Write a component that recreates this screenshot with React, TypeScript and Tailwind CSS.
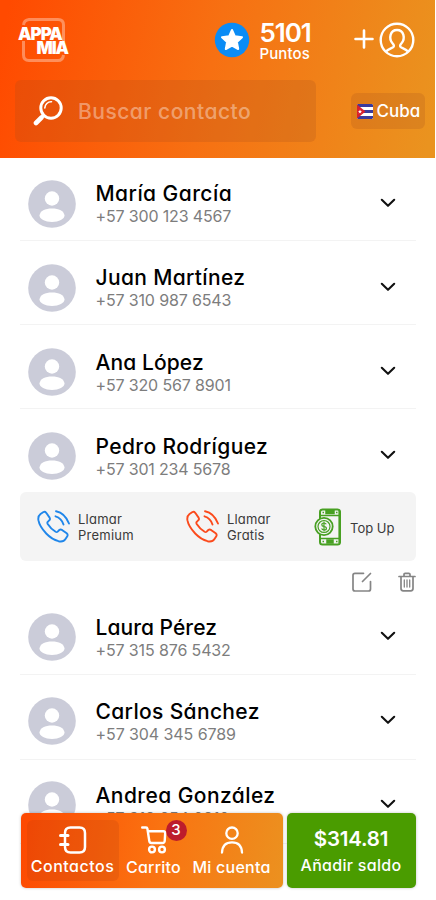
import React from 'react';
import clsx from 'clsx';

interface Contact {
  name: string;
  phone: string;
  nameClass: string;
  phoneClass: string;
}

const contacts: Contact[] = [
  { name: 'María García', phone: '+57 300 123 4567', nameClass: 'tracking-[0.450px]', phoneClass: 'tracking-[-0.150px]' },
  { name: 'Juan Martínez', phone: '+57 310 987 6543', nameClass: 'tracking-[0.350px]', phoneClass: 'tracking-[-0.150px]' },
  { name: 'Ana López', phone: '+57 320 567 8901', nameClass: 'tracking-[0.100px]', phoneClass: 'tracking-[-0.150px]' },
  { name: 'Pedro Rodríguez', phone: '+57 301 234 5678', nameClass: 'tracking-[0.400px]', phoneClass: 'tracking-[-0.170px]' },
];

const moreContacts: Contact[] = [
  { name: 'Laura Pérez', phone: '+57 315 876 5432', nameClass: 'tracking-[0.050px]', phoneClass: 'tracking-[-0.130px]' },
  { name: 'Carlos Sánchez', phone: '+57 304 345 6789', nameClass: 'tracking-[0.350px]', phoneClass: 'tracking-[-0.080px]' },
  { name: 'Andrea González', phone: '+57 312 654 0210', nameClass: 'tracking-[0.430px]', phoneClass: 'tracking-[-0.100px]' },
];

const Logo = () => (
  <div className="relative mt-[18px] ml-[22px] h-[44px] w-[43px] shrink-0">
    <svg viewBox="0 0 43 44" className="h-full w-full" fill="none" stroke="#fff" strokeOpacity={0.35} strokeWidth={3}>
      <path d="M1.500 7 Q2 2 7 1.500 H36 Q41.500 1.500 41.500 7 V24 M41.500 37 Q41 42.500 36 42.500 H7 Q1.500 42.500 1.500 37 V23" />
    </svg>
    <span className="absolute top-[9px] -left-[4px] text-[17px] leading-[14px] font-black tracking-[-1px] text-white">APPA</span>
    <span className="absolute top-[23px] left-[14.500px] text-[17px] leading-[14px] font-black tracking-[-1.100px] text-white">MIA</span>
  </div>
);

const StarBadge = () => (
  <svg viewBox="0 0 36 36" className="h-9 w-9">
    <circle cx="18" cy="18" r="17.200" fill="#0b8cf5" />
    <path
      d="M18 8 L20.900 14.300 L28 15.200 L22.900 20 L24.200 27 L18 23.600 L11.800 27 L13.100 20 L8 15.200 L15.100 14.300 Z"
      fill="#fff"
      stroke="#fff"
      strokeWidth={2}
      strokeLinejoin="round"
    />
  </svg>
);

const ProfileIcon = () => (
  <svg viewBox="0 0 36 36" className="h-9 w-9" fill="none" stroke="#fff" strokeWidth={2.4}>
    <circle cx="18" cy="18" r="16.300" />
    <path d="M7 29.500 C9 27 12 26.500 14 25.300 C15.500 24.300 15 23 13.500 21.300 C9.500 16.500 11 8 18 8 C25 8 26.500 16.500 22.500 21.300 C21 23 20.500 24.300 22 25.300 C24 26.500 27 27 29 29.500" />
  </svg>
);

const SearchIcon = () => (
  <svg viewBox="0 0 30 30" className="h-[30px] w-[30px]" fill="none" stroke="#fff" strokeLinecap="round">
    <circle cx="18" cy="12" r="10.200" strokeWidth={3} />
    <path d="M11.800 12 A6.300 6.300 0 0 1 18.500 5.800" strokeWidth={1.6} />
    <path d="M10.500 19.500 L8 22" strokeWidth={3} />
    <path d="M8.500 21.500 L3 27" strokeWidth={4.600} />
  </svg>
);

const CubaFlag = () => (
  <svg viewBox="0 0 16 15" className="h-[15px] w-4">
    <rect width="16" height="15" rx="1.500" fill="#fff" />
    <path d="M1 0 H15 L16 1 V3 H0 V1 Z M0 6 H16 V9 H0 Z M0 12 H16 V14 L15 15 H1 L0 14 Z" fill="#3b3a9c" />
    <path d="M0 0.500 L8.500 7.500 L0 14.500 Z" fill="#d9202d" />
    <path d="M3 5.500 L3.600 7 H5 L3.900 8 L4.300 9.500 L3 8.600 L1.700 9.500 L2.100 8 L1 7 H2.400 Z" fill="#fff" />
  </svg>
);

const Avatar = () => (
  <svg viewBox="0 0 48 48" className="h-12 w-12 shrink-0">
    <circle cx="24" cy="24" r="23.800" fill="#cbccd9" />
    <circle cx="24" cy="18.500" r="7.200" fill="#fff" />
    <path d="M11.500 35.500 C12 31 17 28.500 24 28.500 C31 28.500 36 31 36.500 35.500 C36.500 39 31 42 24 42 C17 42 11.500 39 11.500 35.500 Z" fill="#fff" />
  </svg>
);

const Chevron = () => (
  <svg viewBox="0 0 16 10" className="h-[10px] w-4" fill="none" stroke="#111" strokeWidth={2.100} strokeLinecap="round" strokeLinejoin="round">
    <path d="M1.800 1.800 L8 7.800 L14.200 1.800" />
  </svg>
);

const CallIcon = ({ color }: { color: string }) => (
  <svg viewBox="0 0 34 34" className="h-[34px] w-[34px]" fill="none" stroke={color} strokeWidth={1.9} strokeLinecap="round" strokeLinejoin="round">
    <path d="M3.500 4 L6.500 2 Q8 1.300 9.200 2.800 L12.600 7.600 Q13.500 9.200 12.200 10.400 L10.700 11.900 Q10 12.800 10.700 14 Q13.500 18.500 18.600 21.800 Q19.800 22.500 20.700 21.600 L22.300 20 Q23.500 19 25 19.900 L29.700 23.300 Q31.200 24.600 30.300 26.200 L28.500 29 Q26.500 32.300 21.500 31.200 Q15 29.500 9.200 23.500 Q2.500 16.500 1.400 10.200 Q0.800 6 3.500 4 Z" />
    <path d="M19 1.200 Q28 3 32 13.500" />
    <path d="M18.500 6.300 Q24.500 8 26.500 14.500" />
  </svg>
);

const TopUpIcon = () => (
  <svg viewBox="0 0 28 38" className="h-[38px] w-7" fill="none" stroke="#48a023" strokeWidth={1.5}>
    <path d="M6 11 V4 Q6 1.500 8.500 1.500 H23.500 Q26 1.500 26 4 V34 Q26 36.500 23.500 36.500 H8.500 Q6 36.500 6 34 V26" strokeWidth={2} />
    <path d="M25.500 3 V35" strokeWidth={2.200} />
    <path d="M6 7.500 H25 M6 30.500 H25" />
    <path d="M12 2 H20 V5.500 H12 Z M13 32 H19 V35 H13 Z" fill="#48a023" />
    <path d="M8.500 4.500 H10 M22 4.500 H23.500 M8.500 33.500 H10 M22 33.500 H23.500" />
    <circle cx="10" cy="18.500" r="8.700" fill="#f4f4f4" strokeWidth={1.800} />
    <circle cx="10" cy="18.500" r="6" strokeWidth={1.200} />
    <path d="M12.300 16.300 Q11.500 15 10 15 Q7.800 15 7.800 16.700 Q7.800 18.300 10 18.500 Q12.400 18.800 12.400 20.400 Q12.400 22 10 22 Q8.200 22 7.600 20.600 M10 13.600 V23.400" strokeWidth={1.200} />
  </svg>
);

const EditIcon = () => (
  <svg viewBox="0 0 20 20" className="h-5 w-5" fill="none" stroke="#858585" strokeWidth={1.700} strokeLinecap="round">
    <path d="M11.500 1.300 H3 Q1 1.300 1 3.300 V17 Q1 19 3 19 H16.500 Q18.500 19 18.500 17 V9.500" />
    <path d="M10.500 9.500 L18.500 1.500" />
  </svg>
);

const TrashIcon = () => (
  <svg viewBox="0 0 18 20" className="h-5 w-[18px]" fill="none" stroke="#858585" strokeWidth={1.700} strokeLinecap="round">
    <path d="M1 4.500 H17 M6 4 V2.500 Q6 1.300 7.200 1.300 H10.800 Q12 1.300 12 2.500 V4" />
    <path d="M3 5 V16.500 Q3 18.800 5.200 18.800 H12.800 Q15 18.800 15 16.500 V5" />
    <path d="M6.300 8 V15 M9 8 V15 M11.700 8 V15" strokeWidth={1.300} />
  </svg>
);

const NotebookIcon = () => (
  <svg viewBox="0 0 28 28" className="h-7 w-7" fill="none" stroke="#fff" strokeWidth={2.500} strokeLinecap="round">
    <path d="M6 7 Q6 1.500 11.500 1.500 H20.500 Q26 1.500 26 7 V21 Q26 26.500 20.500 26.500 H11.500 Q6 26.500 6 21" />
    <path d="M6 8 V20" />
    <path d="M1.500 9.500 H9 M1.500 18.500 H9" strokeWidth={3} />
  </svg>
);

const CartIcon = () => (
  <svg viewBox="0 0 26 28" className="h-7 w-[26px]" fill="none" stroke="#fff" strokeWidth={2.400} strokeLinecap="round" strokeLinejoin="round">
    <path d="M1.200 1.500 H5 Q6.200 1.500 6.400 2.700 L8.300 15 Q8.600 17 10.500 17 H21.500 Q23.500 17 23.700 15 L24.200 7.200 Q24.200 5.200 22.500 5.200 H7" />
    <circle cx="11" cy="23.500" r="2.900" />
    <circle cx="21" cy="23.500" r="2.900" />
  </svg>
);

const UserIcon = () => (
  <svg viewBox="0 0 24 28" className="h-7 w-6" fill="none" stroke="#fff" strokeWidth={2.300} strokeLinecap="round">
    <circle cx="12" cy="7.200" r="5.700" />
    <path d="M2 26.500 Q2.500 16.300 12 16.300 Q21.500 16.300 22 26.500" />
  </svg>
);

const ContactRow = ({ contact, className }: { contact: Contact; className?: string }) => (
  <div className={clsx('flex h-[84.200px] items-start pl-[7.500px]', className)}>
    <Avatar />
    <div className="ml-5 flex flex-1 flex-col pt-[2.700px] whitespace-nowrap">
      <span className={clsx('text-[21px] leading-6 font-medium text-black', contact.nameClass)}>{contact.name}</span>
      <span className={clsx('text-[16px] leading-5 text-[#7d7d7d]', contact.phoneClass)}>{contact.phone}</span>
    </div>
    <div className="mt-[18px] mr-5">
      <Chevron />
    </div>
  </div>
);

const App: React.FC = () => {
  return (
    <div className="relative flex h-[900px] w-[436px] flex-col overflow-hidden bg-white font-['Inter','Noto_Sans',sans-serif] [font-feature-settings:'cv11']">
      {/* Header */}
      <header className="flex h-[158px] w-[434.500px] shrink-0 flex-col bg-linear-[102deg,#ff4a00_2%,#f77012_48%,#ea931f_98%]">
        <div className="flex h-20 items-start">
          <Logo />
          <div className="mt-[22px] ml-[149px]">
            <StarBadge />
          </div>
          <div className="mt-[19px] ml-[9.500px] flex w-[53.500px] flex-col whitespace-nowrap text-white">
            <span className="text-[26px] leading-7 font-semibold tracking-[-1.100px]">5101</span>
            <span className="text-[15px] leading-[14px] font-medium tracking-[0.100px]">Puntos</span>
          </div>
          <svg viewBox="0 0 20 20" className="mt-[29px] ml-[41px] h-5 w-5" stroke="#fff" strokeWidth={2.600} strokeLinecap="round">
            <path d="M1.500 10 H18.500 M10 1.500 V18.500" />
          </svg>
          <div className="mt-[22px] ml-[5px]">
            <ProfileIcon />
          </div>
        </div>
        <div className="flex items-center justify-between pr-[10px] pl-[15px]">
          <div className="flex h-[62px] w-[301px] items-center rounded-md bg-[#a04a20]/20 pl-[18px]">
            <SearchIcon />
            <span className="mt-px ml-[15px] text-[21px] font-medium tracking-[0.500px] text-white/40">Buscar contacto</span>
          </div>
          <div className="flex h-[36px] w-[74px] items-center rounded-md bg-[#a04a20]/20 pl-[6px]">
            <CubaFlag />
            <span className="mt-[2px] ml-1 text-[17px] font-medium whitespace-nowrap text-white">Cuba</span>
          </div>
        </div>
      </header>

      {/* Contacts */}
      <main className="-mt-[1.500px] flex flex-col px-5">
        {contacts.map((contact, i) => (
          <ContactRow
            key={contact.name}
            contact={contact}
            className={clsx('pt-[23px]', i < contacts.length - 1 && 'border-b border-[#f3f3f3]')}
          />
        ))}

        <div className="-mt-[0.800px] flex h-[69px] items-center rounded-md bg-[#f4f4f4] text-[13px] leading-4 text-[#3a3a3a]">
          <div className="ml-[16.500px] flex w-[149px] items-center gap-[7.500px]">
            <CallIcon color="#1f86ea" />
            <span className="pt-px tracking-[0.250px]">Llamar<br />Premium</span>
          </div>
          <div className="flex w-[128.500px] items-center gap-[7.500px]">
            <CallIcon color="#fb4a1c" />
            <span className="pt-px tracking-[0.150px]">Llamar<br />Gratis</span>
          </div>
          <div className="flex items-center gap-2">
            <TopUpIcon />
            <span className="pt-[2px] whitespace-nowrap">Top Up</span>
          </div>
        </div>

        <div className="mt-[10.800px] flex h-[19px] items-start justify-end gap-[25.500px] pr-[0.500px]">
          <EditIcon />
          <TrashIcon />
        </div>

        {moreContacts.map((contact) => (
          <ContactRow key={contact.name} contact={contact} className="border-b border-[#f3f3f3] pt-[21.700px]" />
        ))}
      </main>

      {/* Bottom bar */}
      <nav className="absolute top-[813px] left-[20.500px] flex h-[74.500px] w-[395px] gap-1 text-white">
        <div className="flex w-[262px] items-center rounded-[5px] bg-linear-[100deg,#fd4a02_2%,#fa7311_52%,#ec901f_98%] pl-[6px] shadow-[0_0_3px_rgba(0,0,0,0.25)]">
          <div className="flex h-[61px] w-[92px] flex-col items-center rounded-md bg-[#b23a10]/20 pt-[6px]">
            <NotebookIcon />
            <span className="mt-[2px] text-[16px] leading-5 font-medium tracking-[0.500px]">Contactos</span>
          </div>
          <div className="relative flex h-[61px] w-[70px] flex-col items-center pt-[6px]">
            <CartIcon />
            <span className="mt-[3px] text-[16px] leading-5 font-medium tracking-[0.200px]">Carrito</span>
            <span className="absolute top-0 right-[2px] flex h-[21px] w-[21px] items-center justify-center rounded-full bg-[#bd1c2c] text-[15px] font-medium">3</span>
          </div>
          <div className="flex h-[61px] w-[86px] flex-col items-center pt-[6px]">
            <UserIcon />
            <span className="mt-[3px] text-[16px] leading-5 font-medium tracking-[0.250px] whitespace-nowrap">Mi cuenta</span>
          </div>
        </div>
        <div className="flex flex-1 flex-col items-center rounded-[5px] bg-[#4a9c00] pt-[14px] shadow-[0_0_3px_rgba(0,0,0,0.25)]">
          <span className="text-[20.500px] leading-6 font-semibold tracking-[-0.200px]">$314.81</span>
          <span className="mt-[4px] text-[16px] leading-5 font-medium tracking-[0.300px]">Añadir saldo</span>
        </div>
      </nav>
    </div>
  );
};

export default App;
